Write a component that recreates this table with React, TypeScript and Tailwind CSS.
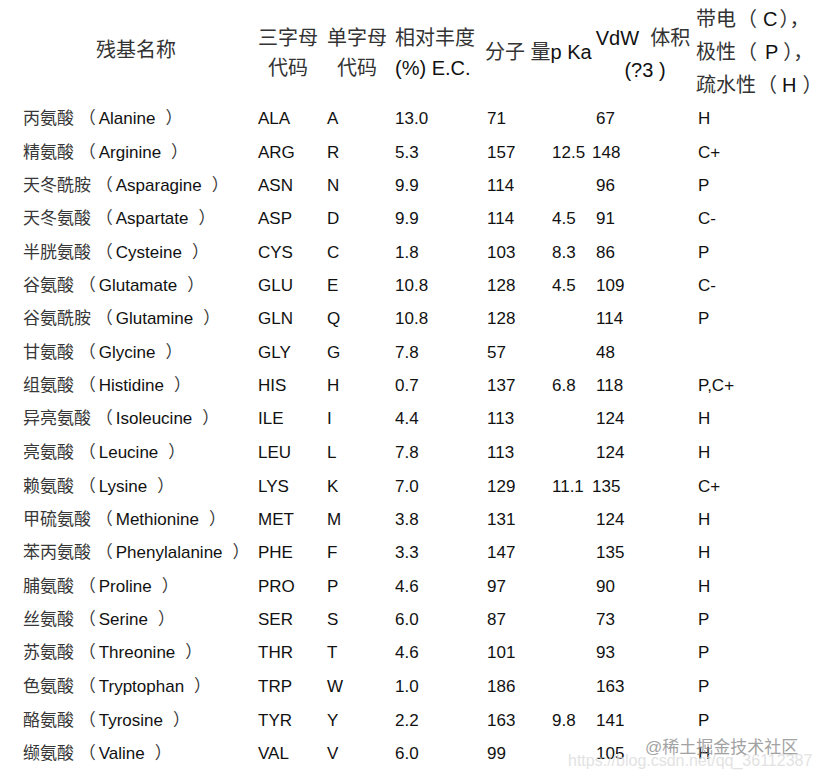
const font = "font-['Liberation_Sans','Noto_Sans_CJK_SC',sans-serif]";

type Row = {
  cn: string;
  en: string;
  c3: string;
  c1: string;
  ab: string;
  mw: string;
  pka: string;
  vdw: string;
  prop: string;
  h: string;
  shift?: boolean;
};

const rows: Row[] = [
  { cn: "丙氨酸", en: "Alanine", c3: "ALA", c1: "A", ab: "13.0", mw: "71", pka: "", vdw: "67", prop: "H", h: "h-[35px]" },
  { cn: "精氨酸", en: "Arginine", c3: "ARG", c1: "R", ab: "5.3", mw: "157", pka: "12.5", vdw: "148", prop: "C+", h: "h-[33px]", shift: true },
  { cn: "天冬酰胺", en: "Asparagine", c3: "ASN", c1: "N", ab: "9.9", mw: "114", pka: "", vdw: "96", prop: "P", h: "h-[33px]" },
  { cn: "天冬氨酸", en: "Aspartate", c3: "ASP", c1: "D", ab: "9.9", mw: "114", pka: "4.5", vdw: "91", prop: "C-", h: "h-[34px]" },
  { cn: "半胱氨酸", en: "Cysteine", c3: "CYS", c1: "C", ab: "1.8", mw: "103", pka: "8.3", vdw: "86", prop: "P", h: "h-[33px]" },
  { cn: "谷氨酸", en: "Glutamate", c3: "GLU", c1: "E", ab: "10.8", mw: "128", pka: "4.5", vdw: "109", prop: "C-", h: "h-[33px]" },
  { cn: "谷氨酰胺", en: "Glutamine", c3: "GLN", c1: "Q", ab: "10.8", mw: "128", pka: "", vdw: "114", prop: "P", h: "h-[34px]" },
  { cn: "甘氨酸", en: "Glycine", c3: "GLY", c1: "G", ab: "7.8", mw: "57", pka: "", vdw: "48", prop: "", h: "h-[33px]" },
  { cn: "组氨酸", en: "Histidine", c3: "HIS", c1: "H", ab: "0.7", mw: "137", pka: "6.8", vdw: "118", prop: "P,C+", h: "h-[33px]" },
  { cn: "异亮氨酸", en: "Isoleucine", c3: "ILE", c1: "I", ab: "4.4", mw: "113", pka: "", vdw: "124", prop: "H", h: "h-[34px]" },
  { cn: "亮氨酸", en: "Leucine", c3: "LEU", c1: "L", ab: "7.8", mw: "113", pka: "", vdw: "124", prop: "H", h: "h-[34px]" },
  { cn: "赖氨酸", en: "Lysine", c3: "LYS", c1: "K", ab: "7.0", mw: "129", pka: "11.1", vdw: "135", prop: "C+", h: "h-[33px]", shift: true },
  { cn: "甲硫氨酸", en: "Methionine", c3: "MET", c1: "M", ab: "3.8", mw: "131", pka: "", vdw: "124", prop: "H", h: "h-[33px]" },
  { cn: "苯丙氨酸", en: "Phenylalanine", c3: "PHE", c1: "F", ab: "3.3", mw: "147", pka: "", vdw: "135", prop: "H", h: "h-[34px]" },
  { cn: "脯氨酸", en: "Proline", c3: "PRO", c1: "P", ab: "4.6", mw: "97", pka: "", vdw: "90", prop: "H", h: "h-[33px]" },
  { cn: "丝氨酸", en: "Serine", c3: "SER", c1: "S", ab: "6.0", mw: "87", pka: "", vdw: "73", prop: "P", h: "h-[33px]" },
  { cn: "苏氨酸", en: "Threonine", c3: "THR", c1: "T", ab: "4.6", mw: "101", pka: "", vdw: "93", prop: "P", h: "h-[34px]" },
  { cn: "色氨酸", en: "Tryptophan", c3: "TRP", c1: "W", ab: "1.0", mw: "186", pka: "", vdw: "163", prop: "P", h: "h-[34px]" },
  { cn: "酪氨酸", en: "Tyrosine", c3: "TYR", c1: "Y", ab: "2.2", mw: "163", pka: "9.8", vdw: "141", prop: "P", h: "h-[33px]" },
  { cn: "缬氨酸", en: "Valine", c3: "VAL", c1: "V", ab: "6.0", mw: "99", pka: "", vdw: "105", prop: "H", h: "h-[33px]" },
];

function Header() {
  return (
    <div className="flex h-[101px] pl-[23px] text-[20px] text-[#111]">
      <div className="w-[235px] shrink-0 pt-[37px] pl-[73px] leading-[26px] text-[#333]">残基名称</div>
      <div className="w-[69px] shrink-0 pt-[23px] leading-[30px]">
        <div className="inline-flex flex-col items-center text-[#333]">
          <span>三字母</span>
          <span>代码</span>
        </div>
      </div>
      <div className="w-[68px] shrink-0 pt-[23px] leading-[30px]">
        <div className="inline-flex flex-col items-center text-[#333]">
          <span>单字母</span>
          <span>代码</span>
        </div>
      </div>
      <div className="w-[92px] shrink-0 pt-[23px] leading-[30px] whitespace-nowrap">
        <div className="text-[#333]">相对丰度</div>
        <div>(%) E.C.</div>
      </div>
      <div className="w-[109px] shrink-0 -ml-[2px] pr-[2px] pt-[39px] leading-[26px] whitespace-nowrap">
        <span className="text-[#333]">分子 量</span>
        <span>p Ka</span>
      </div>
      <div className="w-[102px] shrink-0 pr-[4px] pt-[22px] leading-[32px] text-center whitespace-pre">
        <div>
          <span>VdW </span>
          <span className="text-[#333]"> 体积</span>
        </div>
        <div className="pl-[4px]">(?3 )</div>
      </div>
      <div className="min-w-0 flex-1 pt-[3px] leading-[33px] whitespace-nowrap text-[#333]">
        <div>
          带电<span className="ml-[1px]">（</span>
          <span className="ml-[6px] text-[#111]">C</span>
          <span className="ml-[2px]">），</span>
        </div>
        <div>
          极性<span className="ml-[1px]">（</span>
          <span className="ml-[8px] text-[#111]">P</span>
          <span className="ml-[5px]">），</span>
        </div>
        <div>
          疏水性<span className="ml-[1px]">（</span>
          <span className="ml-[5px] text-[#111]">H</span>
          <span className="ml-[6px] inline-block w-[10px]">）</span>
        </div>
      </div>
    </div>
  );
}

function DataRow({ r }: { r: Row }) {
  return (
    <div className={`flex items-center pl-[23px] text-[17px] text-[#111] ${r.h}`}>
      <div className="w-[235px] shrink-0 whitespace-nowrap">
        <span className="text-[#383838]">{r.cn}</span>
        <span className="text-[#383838]"> （</span>
        <span className="ml-[3px]">{r.en}</span>
        <span className="text-[#383838] ml-[10px]">）</span>
      </div>
      <div className="w-[69px] shrink-0">{r.c3}</div>
      <div className="w-[68px] shrink-0">{r.c1}</div>
      <div className="w-[92px] shrink-0">{r.ab}</div>
      <div className="w-[65px] shrink-0">{r.mw}</div>
      <div className="w-[44px] shrink-0 whitespace-nowrap">{r.pka}</div>
      <div className={r.shift ? "w-[106px] shrink-0 -ml-[4px]" : "w-[102px] shrink-0"}>{r.vdw}</div>
      <div className="min-w-0 flex-1">{r.prop}</div>
    </div>
  );
}

export default function App() {
  return (
    <div className={`relative w-[821px] h-[780px] overflow-hidden bg-white ${font}`}>
      <Header />
      {rows.map((r) => (
        <DataRow key={r.c3} r={r} />
      ))}
      <div className="absolute left-[568px] top-[751px] text-[16px] leading-[20px] text-[#dcdcdc] opacity-80 whitespace-nowrap">
        https://blog.csdn.net/qq_36112387
      </div>
      <div className="absolute left-[645px] top-[737px] text-[17px] leading-[22px] text-[#8c8c8c] opacity-80 whitespace-nowrap">
        @稀土掘金技术社区
      </div>
    </div>
  );
}
